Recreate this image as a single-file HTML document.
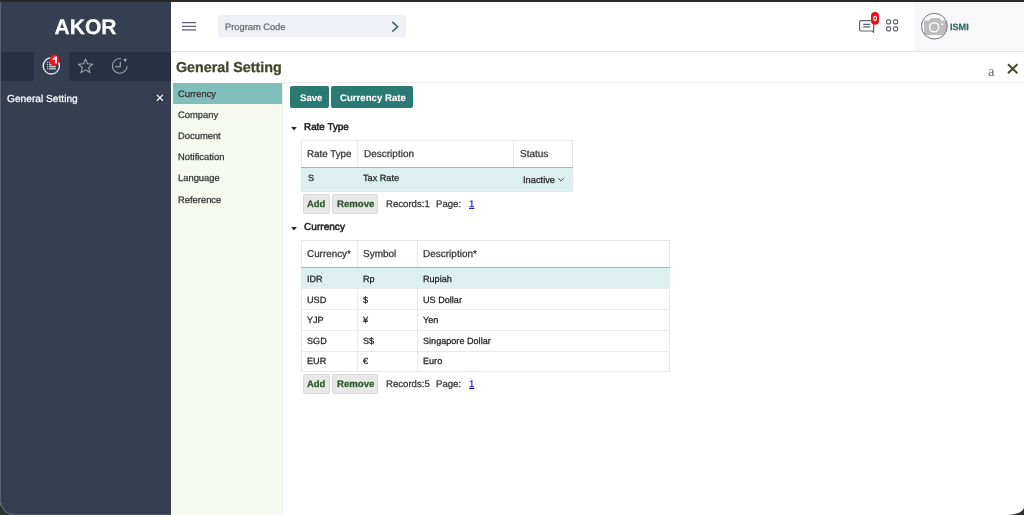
<!DOCTYPE html>
<html><head><meta charset="utf-8">
<style>
html,body{margin:0;padding:0;width:1024px;height:515px;overflow:hidden;background:#1e2a2a;}
body{font-family:"Liberation Sans",sans-serif;position:relative;text-rendering:geometricPrecision;}
.a{position:absolute;white-space:nowrap;}
#win{position:absolute;left:0;top:0;width:1024px;height:515px;background:#fff;}
#topline{left:0;top:0;width:1024px;height:1.6px;background:#2a2a2a;}
#side{left:0;top:2px;width:171px;height:513px;background:#363f51;}
#sideedge{left:0;top:2px;width:1px;height:513px;background:#5a6272;}
#band{left:0;top:51.5px;width:171px;height:28.5px;background:#293245;}
#tab{left:34.2px;top:51.5px;width:34.6px;height:28.5px;background:#353e50;}
.t{line-height:1;margin-top:0.9px;}
.a{will-change:transform;}
.t{-webkit-text-stroke:0.25px currentColor;}
</style></head><body>
<div id="win">
<div class="a" id="side"></div>
<div class="a" id="band"></div>
<div class="a" id="tab"></div>
<div class="a" id="sideedge"></div>
<div class="a" id="topline"></div>

<!-- AKOR -->
<div class="a t" style="left:0;width:171px;text-align:center;top:16.6px;font-size:21px;font-weight:bold;color:#fff;">AKOR</div>

<!-- sidebar icons -->
<svg class="a" style="left:40px;top:53px" width="26" height="26" viewBox="0 0 26 26">
  <circle cx="11.3" cy="12.9" r="8.1" fill="none" stroke="#e6e8ec" stroke-width="1.4"/>
  <g fill="#c4c8d0">
    <rect x="6.9" y="8.8" width="1.1" height="1.1"/><rect x="6.9" y="10.9" width="1.1" height="1.1"/><rect x="6.9" y="13" width="1.1" height="1.1"/><rect x="6.9" y="15.1" width="1.1" height="1.1"/>
    <rect x="8.9" y="8.8" width="6.9" height="1.4"/><rect x="8.9" y="10.9" width="6.9" height="1.4"/><rect x="8.9" y="13" width="6.9" height="1.4"/><rect x="8.9" y="15.1" width="6.9" height="1.4"/>
  </g>
  <rect x="9.9" y="1.4" width="9.1" height="11.2" rx="4.5" fill="#ee1118"/>
  <path d="M12.6 5.3 Q14.6 4.6 15.1 3.4 H16.9 V10.4 H15.1 V6.2 Q14 6.8 12.6 6.9 Z" fill="#fff"/>
</svg>
<svg class="a" style="left:76px;top:57px" width="19" height="18" viewBox="0 0 19 18">
  <path d="M9.50 1.90 L11.47 6.79 L16.73 7.15 L12.68 10.53 L13.97 15.65 L9.50 12.84 L5.03 15.65 L6.32 10.53 L2.27 7.15 L7.53 6.79 Z" fill="none" stroke="#a3a8b2" stroke-width="1.05" stroke-linejoin="round"/>
</svg>
<svg class="a" style="left:109px;top:56px" width="20" height="20" viewBox="0 0 20 20">
  <path d="M11.82 2.62 A7.35 7.35 0 1 0 18.15 10.20" fill="none" stroke="#a3a8b2" stroke-width="1.1"/>
  <path d="M11.3 5.7 V10.7 H6.2" fill="none" stroke="#a3a8b2" stroke-width="1.1"/>
  <path d="M14.2 3.5 L17.6 2.5 L16.7 6 Z" fill="#b8bcc4"/>
</svg>

<!-- sidebar item -->
<div class="a t" style="left:7px;top:94.2px;font-size:10.2px;color:#fff;">General Setting</div>
<svg class="a" style="left:156px;top:94px" width="8" height="8" viewBox="0 0 8 8"><path d="M0.9 0.9 L6.9 6.7 M6.9 0.9 L0.9 6.7" stroke="#fff" stroke-width="1.2"/></svg>

<!-- header -->
<div class="a" style="left:171px;top:51px;width:853px;height:1px;background:#e4e4e4;"></div>
<div class="a" style="left:914px;top:2px;width:110px;height:49px;background:#f8f8f8;"></div>
<svg class="a" style="left:181px;top:21px" width="16" height="10" viewBox="0 0 16 10">
  <g stroke="#5d6372" stroke-width="1.3"><path d="M1 1.6H15"/><path d="M1 5.4H15"/><path d="M1 8.9H15"/></g>
</svg>
<div class="a" style="left:218px;top:15.2px;width:188px;height:21.6px;background:#f0f1f6;border-radius:2px;"></div>
<div class="a t" style="left:225px;top:21.7px;font-size:9.3px;color:#6b6b6b;">Program Code</div>
<svg class="a" style="left:390px;top:20px" width="10" height="13" viewBox="0 0 10 13">
  <path d="M2.3 1.9 L7.6 6.7 L2.3 11.5" fill="none" stroke="#2e5f60" stroke-width="1.5"/>
</svg>

<!-- chat icon -->
<svg class="a" style="left:857px;top:10px" width="24" height="24" viewBox="0 0 24 24">
  <path d="M4 10.6 Q2.6 10.6 2.6 12 V19.6 Q2.6 21 4 21 H15 L16.6 22.3 V12 Q16.6 10.6 15.2 10.6 Z" fill="none" stroke="#5d6372" stroke-width="1.2" stroke-linejoin="round"/>
  <path d="M6.2 14.3 H13.2 M6.2 16.9 H13.2" stroke="#5d6372" stroke-width="1.2"/>
  <rect x="14" y="2" width="8" height="12.8" rx="4" fill="#e5141b"/>
  <text x="18" y="10.8" font-size="7.5" font-weight="bold" fill="#fff" text-anchor="middle" font-family="Liberation Sans">0</text>
</svg>
<!-- grid icon -->
<svg class="a" style="left:884px;top:17px" width="16" height="16" viewBox="0 0 16 16">
  <g fill="none" stroke="#5d6372" stroke-width="1.2">
    <rect x="2.6" y="2.8" width="4" height="4" rx="1.4"/><rect x="9.6" y="2.8" width="4" height="4" rx="1.4"/>
    <rect x="2.6" y="9.8" width="4" height="4" rx="1.4"/><rect x="9.6" y="9.8" width="4" height="4" rx="1.4"/>
  </g>
</svg>
<!-- avatar -->
<svg class="a" style="left:920px;top:12px" width="29" height="29" viewBox="0 0 29 29">
  <defs><clipPath id="cc"><circle cx="14.4" cy="14.2" r="12.6"/></clipPath></defs>
  <circle cx="14.4" cy="14.2" r="12.6" fill="#fafafa"/>
  <g clip-path="url(#cc)">
    <path d="M10 7.5 Q10.4 6 12 6 H18.6 Q20.2 6 20.6 7.5 L21 8.6 H26 Q27 8.6 27 10 V21.6 Q27 23 26 23 H5 Q4 23 4 21.6 V10 Q4 8.6 5 8.6 H9.6 Z" fill="#bdbdbd"/>
    <circle cx="14.2" cy="15.3" r="4.6" fill="none" stroke="#fff" stroke-width="1.4"/>
    <circle cx="22.4" cy="12.2" r="0.9" fill="#fff"/>
  </g>
  <circle cx="14.4" cy="14.2" r="12.9" fill="none" stroke="#5d6372" stroke-width="0.9"/>
</svg>
<div class="a t" style="left:950px;top:21.9px;font-size:9.1px;font-weight:bold;color:#2e6b6a;">ISMI</div>

<!-- title row -->
<div class="a t" style="left:176px;top:60.1px;font-size:14.3px;font-weight:bold;color:#44462a;-webkit-text-stroke:0.3px #44462a;">General Setting</div>
<div class="a" style="left:987.5px;top:65.3px;font-family:'Liberation Serif',serif;font-size:14.5px;line-height:1;color:#66664c;">a</div>
<svg class="a" style="left:1006px;top:62px" width="13" height="13" viewBox="0 0 13 13"><path d="M2 2.2 L11.4 11.2 M11.4 2.2 L2 11.2" stroke="#46472b" stroke-width="1.9"/></svg>
<div class="a" style="left:282px;top:82px;width:742px;height:1px;background:#ececec;"></div>

<!-- left menu -->
<div class="a" style="left:172px;top:83px;width:110px;height:432px;background:#f6f9ef;border-right:1px solid #edf0e8;"></div>
<div class="a" style="left:173px;top:83px;width:108.5px;height:21px;background:#80bfba;"></div>
<div class="a t" style="left:177.5px;top:88.2px;font-size:9.4px;color:#333;">Currency</div>
<div class="a t" style="left:177.5px;top:109.4px;font-size:9.4px;color:#333;">Company</div>
<div class="a t" style="left:177.5px;top:130.4px;font-size:9.4px;color:#333;">Document</div>
<div class="a t" style="left:177.5px;top:151.6px;font-size:9.4px;color:#333;">Notification</div>
<div class="a t" style="left:177.5px;top:172.6px;font-size:9.4px;color:#333;">Language</div>
<div class="a t" style="left:177.5px;top:193.7px;font-size:9.4px;color:#333;">Reference</div>

<!-- buttons -->
<div class="a" style="left:290px;top:86.2px;width:39px;height:21.8px;background:#2a7a73;border-radius:2px;"></div>
<div class="a" style="left:331px;top:86.2px;width:82px;height:21.8px;background:#2a7a73;border-radius:2px;"></div>
<div class="a t" style="left:299.5px;top:92.7px;font-size:9.6px;font-weight:bold;color:#fff;-webkit-text-stroke:0.1px #fff;">Save</div>
<div class="a t" style="left:339.5px;top:92.7px;font-size:9.65px;font-weight:bold;color:#fff;-webkit-text-stroke:0.1px #fff;">Currency Rate</div>

<!-- Rate Type section -->
<svg class="a" style="left:290px;top:126px" width="8" height="5" viewBox="0 0 8 5"><path d="M1.2 0.9 H6.8 L4 4.4 Z" fill="#222"/></svg>
<div class="a t" style="left:303.5px;top:122.5px;font-size:9.9px;color:#222;-webkit-text-stroke:0.5px #222;">Rate Type</div>

<!-- table 1 -->
<div class="a" style="left:301px;top:139.8px;width:271.5px;height:51.9px;border:1px solid #e6e6e6;box-sizing:border-box;background:#fff;"></div>
<div class="a" style="left:301px;top:167.4px;width:271.5px;height:23.7px;background:#dcf0ef;border-left:1px solid #e6e6e6;border-right:1px solid #e6e6e6;box-sizing:border-box;"></div>
<div class="a" style="left:356.8px;top:140px;width:1px;height:51px;background:#e9e9e9;"></div>
<div class="a" style="left:513.3px;top:140px;width:1px;height:51px;background:#e9e9e9;"></div>
<div class="a" style="left:301px;top:166.8px;width:271.5px;height:1.4px;background:#74ccc7;"></div>
<div class="a t" style="left:307px;top:149.5px;font-size:9.8px;color:#333;">Rate Type</div>
<div class="a t" style="left:363.5px;top:149.5px;font-size:10px;color:#333;">Description</div>
<div class="a t" style="left:519.5px;top:149.5px;font-size:10px;color:#333;">Status</div>
<div class="a t" style="left:307.5px;top:173.4px;font-size:9.1px;color:#222;">S</div>
<div class="a t" style="left:363.4px;top:173.2px;font-size:9.15px;color:#222;">Tax Rate</div>
<div class="a t" style="left:522.8px;top:174.8px;font-size:9.3px;color:#222;">Inactive</div>
<svg class="a" style="left:557px;top:177px" width="8" height="5" viewBox="0 0 8 5"><path d="M1.2 1.3 L4 3.9 L6.8 1.3" fill="none" stroke="#333" stroke-width="0.9"/></svg>

<!-- add/remove 1 -->
<div class="a" style="left:303px;top:194.1px;width:27px;height:20px;background:#e8e8e8;border:1px solid #d9d9d9;box-sizing:border-box;border-radius:2px;"></div>
<div class="a" style="left:332.4px;top:194.1px;width:46.2px;height:20px;background:#e8e8e8;border:1px solid #d9d9d9;box-sizing:border-box;border-radius:2px;"></div>
<div class="a t" style="left:307.3px;top:199.2px;font-size:9.45px;font-weight:bold;color:#2c552c;">Add</div>
<div class="a t" style="left:336.6px;top:199.2px;font-size:9.6px;font-weight:bold;color:#2c552c;">Remove</div>
<div class="a t" style="left:385.8px;top:199.5px;font-size:9.6px;color:#333;">Records:1</div>
<div class="a t" style="left:436px;top:199.5px;font-size:9.6px;color:#333;">Page:</div>
<div class="a t" style="left:469.2px;top:199.5px;font-size:9.6px;color:#1a1ae6;text-decoration:underline;">1</div>

<!-- Currency section -->
<svg class="a" style="left:290px;top:226px" width="8" height="5" viewBox="0 0 8 5"><path d="M1.2 0.9 H6.8 L4 4.4 Z" fill="#222"/></svg>
<div class="a t" style="left:303.5px;top:221.9px;font-size:10.1px;color:#222;-webkit-text-stroke:0.5px #222;">Currency</div>

<!-- table 2 -->
<div class="a" style="left:301px;top:240.3px;width:368.5px;height:131.6px;border:1px solid #e6e6e6;box-sizing:border-box;background:#fff;"></div>
<div class="a" style="left:301px;top:267.3px;width:368.5px;height:21px;background:#dcf0ef;border-left:1px solid #e6e6e6;border-right:1px solid #e6e6e6;box-sizing:border-box;"></div>
<div class="a" style="left:301px;top:288.3px;width:368.5px;height:1px;background:#e9e9e9;"></div>
<div class="a" style="left:301px;top:309px;width:368.5px;height:1px;background:#e9e9e9;"></div>
<div class="a" style="left:301px;top:329.8px;width:368.5px;height:1px;background:#e9e9e9;"></div>
<div class="a" style="left:301px;top:350.5px;width:368.5px;height:1px;background:#e9e9e9;"></div>
<div class="a" style="left:356.6px;top:240.5px;width:1px;height:130.6px;background:#e9e9e9;"></div>
<div class="a" style="left:417px;top:240.5px;width:1px;height:130.6px;background:#e9e9e9;"></div>
<div class="a" style="left:301px;top:266.6px;width:368.5px;height:1.4px;background:#74ccc7;"></div>
<div class="a t" style="left:307px;top:249px;font-size:9.9px;color:#333;">Currency*</div>
<div class="a t" style="left:363px;top:249px;font-size:10px;color:#333;">Symbol</div>
<div class="a t" style="left:423px;top:249px;font-size:10px;color:#333;">Description*</div>

<div class="a t" style="left:306.9px;top:274.2px;font-size:9.1px;color:#222;">IDR</div>
<div class="a t" style="left:363px;top:274.2px;font-size:9.1px;color:#222;">Rp</div>
<div class="a t" style="left:423px;top:274.2px;font-size:9.1px;color:#222;">Rupiah</div>
<div class="a t" style="left:306.9px;top:294.9px;font-size:9.1px;color:#222;">USD</div>
<div class="a t" style="left:363px;top:294.9px;font-size:9.1px;color:#222;">$</div>
<div class="a t" style="left:423px;top:294.9px;font-size:9.1px;color:#222;">US Dollar</div>
<div class="a t" style="left:306.9px;top:315.6px;font-size:9.1px;color:#222;">YJP</div>
<div class="a t" style="left:363px;top:315.6px;font-size:9.1px;color:#222;">¥</div>
<div class="a t" style="left:423px;top:315.6px;font-size:9.1px;color:#222;">Yen</div>
<div class="a t" style="left:306.9px;top:336px;font-size:9.1px;color:#222;">SGD</div>
<div class="a t" style="left:363px;top:336px;font-size:9.1px;color:#222;">S$</div>
<div class="a t" style="left:423px;top:336px;font-size:9.1px;color:#222;">Singapore Dollar</div>
<div class="a t" style="left:306.9px;top:356.4px;font-size:9.1px;color:#222;">EUR</div>
<div class="a t" style="left:363px;top:356.4px;font-size:9.1px;color:#222;">€</div>
<div class="a t" style="left:423px;top:356.4px;font-size:9.1px;color:#222;">Euro</div>

<!-- add/remove 2 -->
<div class="a" style="left:303px;top:374.1px;width:27px;height:20px;background:#e8e8e8;border:1px solid #d9d9d9;box-sizing:border-box;border-radius:2px;"></div>
<div class="a" style="left:332.4px;top:374.1px;width:46.2px;height:20px;background:#e8e8e8;border:1px solid #d9d9d9;box-sizing:border-box;border-radius:2px;"></div>
<div class="a t" style="left:307.3px;top:379.2px;font-size:9.45px;font-weight:bold;color:#2c552c;">Add</div>
<div class="a t" style="left:336.6px;top:379.2px;font-size:9.6px;font-weight:bold;color:#2c552c;">Remove</div>
<div class="a t" style="left:385.8px;top:379.6px;font-size:9.6px;color:#333;">Records:5</div>
<div class="a t" style="left:436px;top:379.6px;font-size:9.6px;color:#333;">Page:</div>
<div class="a t" style="left:469.2px;top:379.6px;font-size:9.6px;color:#1a1ae6;text-decoration:underline;">1</div>
<svg class="a" style="left:0;top:0;" width="1024" height="515" viewBox="0 0 1024 515">
  <path d="M0 502 A13 13 0 0 0 13 515 L0 515 Z" fill="#27362f"/>
  <path d="M1 502 A13 13 0 0 0 13 514.5" fill="none" stroke="#687080" stroke-width="1"/>
  <path d="M13 514.5 H171" stroke="#4f5868" stroke-width="1"/>
  <path d="M1024 507.5 A16 8 0 0 1 1008 515 L1024 515 Z" fill="#243434"/>
</svg>
</div>
</body></html>
